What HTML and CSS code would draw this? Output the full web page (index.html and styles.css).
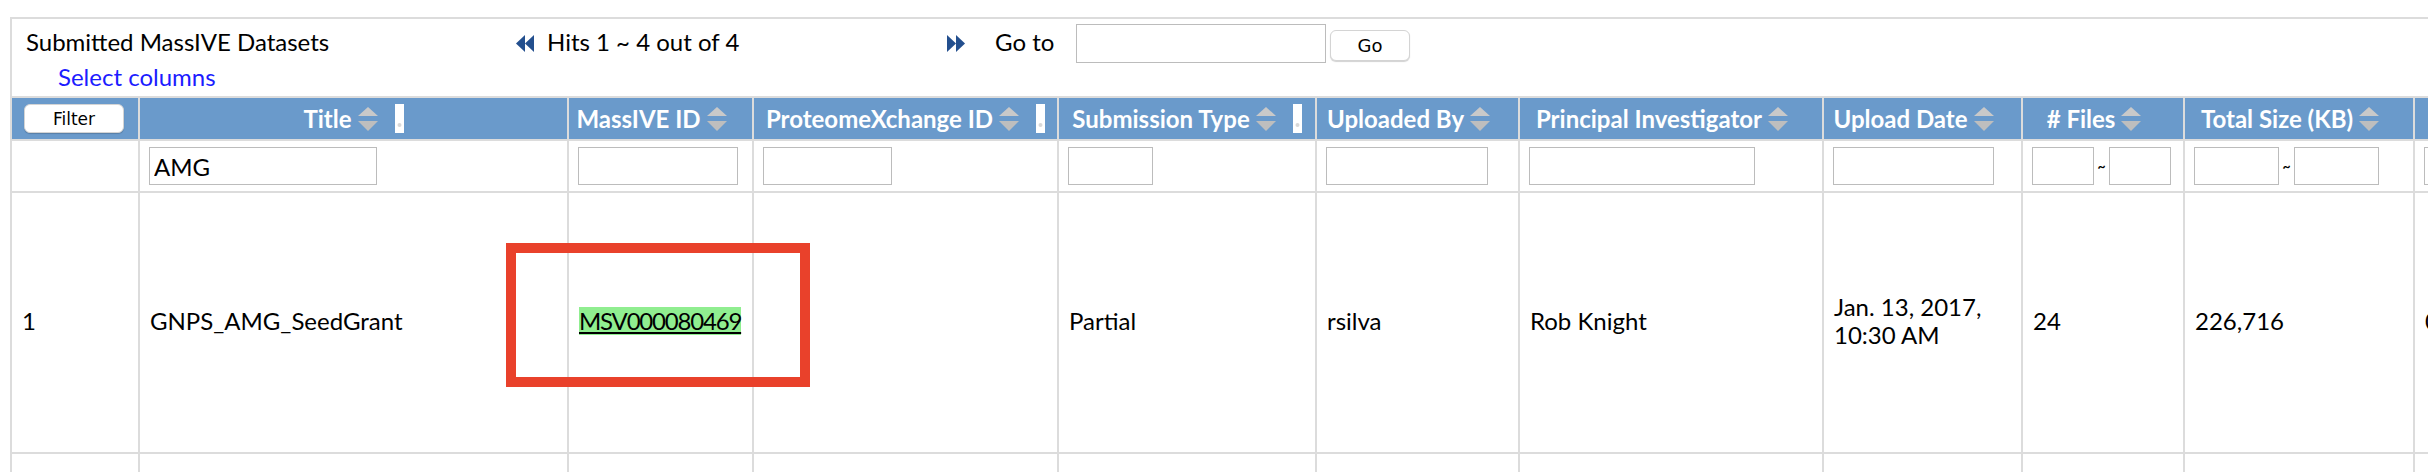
FILE: index.html
```html
<!DOCTYPE html>
<html lang="en">
<head>
<meta charset="utf-8">
<title>Submitted MassIVE Datasets</title>
<link rel="stylesheet" href="styles.css">
</head>
<body>
<div class="panel">
  <div class="toolbar">
    <div class="ds-title">Submitted MassIVE Datasets</div>
    <div class="pager">
      <svg class="nav-icon" viewBox="0 0 18 17" aria-hidden="true"><polygon points="9,0 0,8.5 9,17"/><polygon points="18,0 9,8.5 18,17"/></svg>
      <span class="hits">Hits 1 ~ 4 out of 4</span>
    </div>
    <div class="goto">
      <svg class="nav-icon" viewBox="0 0 18 17" aria-hidden="true"><polygon points="0,0 9,8.5 0,17"/><polygon points="9,0 18,8.5 9,17"/></svg>
      <span class="goto-label">Go to</span>
      <input class="goto-input" type="text">
      <button class="btn go-btn" type="button">Go</button>
    </div>
  </div>
  <a class="select-cols" href="#">Select columns</a>

  <div class="grid">
    <!-- header row -->
    <div class="cell head"><button class="btn filter-btn" type="button">Filter</button></div>
    <div class="cell head"><span>Title</span><svg class="sort" viewBox="0 0 20 24"><polygon class="up" points="10,0 20,9 0,9"/><polygon class="down" points="0,14 20,14 10,24"/></svg><svg class="grip" viewBox="0 0 9 29"><rect class="grip-bar" x="0" y="0" width="9" height="29"/><circle class="grip-dot" cx="4.5" cy="21" r="2"/></svg></div>
    <div class="cell head noresize"><span>MassIVE ID</span><svg class="sort" viewBox="0 0 20 24"><polygon class="up" points="10,0 20,9 0,9"/><polygon class="down" points="0,14 20,14 10,24"/></svg></div>
    <div class="cell head"><span>ProteomeXchange ID</span><svg class="sort" viewBox="0 0 20 24"><polygon class="up" points="10,0 20,9 0,9"/><polygon class="down" points="0,14 20,14 10,24"/></svg><svg class="grip" viewBox="0 0 9 29"><rect class="grip-bar" x="0" y="0" width="9" height="29"/><circle class="grip-dot" cx="4.5" cy="21" r="2"/></svg></div>
    <div class="cell head"><span>Submission Type</span><svg class="sort" viewBox="0 0 20 24"><polygon class="up" points="10,0 20,9 0,9"/><polygon class="down" points="0,14 20,14 10,24"/></svg><svg class="grip" viewBox="0 0 9 29"><rect class="grip-bar" x="0" y="0" width="9" height="29"/><circle class="grip-dot" cx="4.5" cy="21" r="2"/></svg></div>
    <div class="cell head noresize"><span>Uploaded By</span><svg class="sort" viewBox="0 0 20 24"><polygon class="up" points="10,0 20,9 0,9"/><polygon class="down" points="0,14 20,14 10,24"/></svg></div>
    <div class="cell head noresize"><span>Principal Investigator</span><svg class="sort" viewBox="0 0 20 24"><polygon class="up" points="10,0 20,9 0,9"/><polygon class="down" points="0,14 20,14 10,24"/></svg></div>
    <div class="cell head noresize"><span>Upload Date</span><svg class="sort" viewBox="0 0 20 24"><polygon class="up" points="10,0 20,9 0,9"/><polygon class="down" points="0,14 20,14 10,24"/></svg></div>
    <div class="cell head noresize"><span># Files</span><svg class="sort" viewBox="0 0 20 24"><polygon class="up" points="10,0 20,9 0,9"/><polygon class="down" points="0,14 20,14 10,24"/></svg></div>
    <div class="cell head noresize"><span>Total Size (KB)</span><svg class="sort" viewBox="0 0 20 24"><polygon class="up" points="10,0 20,9 0,9"/><polygon class="down" points="0,14 20,14 10,24"/></svg></div>
    <div class="cell head"></div>

    <!-- filter row -->
    <div class="cell filt"></div>
    <div class="cell filt"><input class="fin w-title" type="text" value="AMG"></div>
    <div class="cell filt"><input class="fin w-msv" type="text"></div>
    <div class="cell filt"><input class="fin w-px" type="text"></div>
    <div class="cell filt"><input class="fin w-type" type="text"></div>
    <div class="cell filt"><input class="fin w-user" type="text"></div>
    <div class="cell filt"><input class="fin w-pi" type="text"></div>
    <div class="cell filt"><input class="fin w-date" type="text"></div>
    <div class="cell filt"><input class="fin w-files" type="text"><span class="tilde">~</span><input class="fin w-files" type="text"></div>
    <div class="cell filt"><input class="fin w-size" type="text"><span class="tilde">~</span><input class="fin w-size" type="text"></div>
    <div class="cell filt"><input class="fin w-spec" type="text"></div>

    <!-- data row -->
    <div class="cell data">1</div>
    <div class="cell data">GNPS_AMG_SeedGrant</div>
    <div class="cell data"><a class="msv" href="#">MSV000080469</a></div>
    <div class="cell data"></div>
    <div class="cell data">Partial</div>
    <div class="cell data">rsilva</div>
    <div class="cell data">Rob Knight</div>
    <div class="cell data">Jan. 13, 2017, 10:30 AM</div>
    <div class="cell data">24</div>
    <div class="cell data">226,716</div>
    <div class="cell data">0</div>

    <!-- next row (cut off) -->
    <div class="cell next"></div>
    <div class="cell next"></div>
    <div class="cell next"></div>
    <div class="cell next"></div>
    <div class="cell next"></div>
    <div class="cell next"></div>
    <div class="cell next"></div>
    <div class="cell next"></div>
    <div class="cell next"></div>
    <div class="cell next"></div>
    <div class="cell next"></div>
  </div>
</div>
<div class="callout" aria-hidden="true"></div>
</body>
</html>
```

FILE: styles.css
```css
html, body {
  margin: 0;
  padding: 0;
  overflow: hidden;
  background: #ffffff;
}

body {
  position: relative;
  width: 2428px;
  height: 472px;
  font-family: Lato, "Open Sans", sans-serif;
  font-size: 24px;
  line-height: 28px;
  color: #000;
}

.panel {
  margin: 17px 0 0 10px;
  width: 2603px;
  border-top: 2px solid #dcdcdc;
  border-left: 2px solid #dcdcdc;
}

/* ---------- toolbar ---------- */
.toolbar {
  display: flex;
  align-items: flex-start;
  padding-top: 5px;
}

.ds-title {
  margin: 4px 0 0 14px;
  width: 490px;
  flex: none;
}

.pager {
  display: flex;
  align-items: flex-start;
  width: 431px;
  flex: none;
  margin-top: 4px;
}

.nav-icon {
  width: 18px;
  height: 17px;
  margin-top: 7px;
  fill: #234f8e;
  flex: none;
}

.hits {
  margin-left: 13px;
}

.goto {
  display: flex;
  align-items: flex-start;
}

.goto .nav-icon {
  margin-top: 11px;
}

.goto-label {
  margin: 4px 0 0 30px;
  width: 81px;
  flex: none;
}

.goto-input {
  width: 250px;
  height: 39px;
  box-sizing: border-box;
  border: 1px solid #bcbcbc;
  margin: 0;
  padding: 0 5px;
  font: inherit;
}

.btn {
  background: #ffffff;
  border: 1px solid #d4d4d4;
  border-radius: 6px;
  box-shadow: 0 1px 1px rgba(0, 0, 0, 0.18);
  font-family: "DejaVu Sans", Verdana, sans-serif;
  color: #000;
  padding: 0;
  margin: 0;
}

.go-btn {
  width: 80px;
  height: 31px;
  margin: 6px 0 0 4px;
  font-size: 18px;
}

.select-cols {
  display: block;
  margin-left: 46px;
  width: max-content;
  color: #1c1cff;
  text-decoration: none;
}

/* ---------- grid ---------- */
.grid {
  margin-top: 5px;
  border-top: 2px solid #dcdcdc;
  display: grid;
  grid-template-columns: 126px 429px 185px 305px 258px 203px 304px 199px 162px 230px 300px;
}

.cell {
  box-sizing: border-box;
  border-left: 2px solid #dcdcdc;
  border-bottom: 2px solid #dcdcdc;
  min-width: 0;
}

.grid > .cell:nth-child(11n + 1) {
  border-left: 0;
}

.head {
  height: 43px;
  background: #6a9acb;
  color: #ffffff;
  font-weight: 700;
  display: flex;
  align-items: center;
  justify-content: center;
  white-space: nowrap;
  overflow: hidden;
}

.head.noresize {
  padding-right: 18px;
}

.filter-btn {
  width: 100px;
  height: 29px;
  font-size: 17px;
  margin-left: -2px;
}

.sort {
  display: block;
  width: 20px;
  height: 24px;
  margin-left: 6px;
  flex: none;
}

.sort .up {
  fill: #c9c9c9;
}

.sort .down {
  fill: #bebebe;
}

.grip {
  display: block;
  width: 9px;
  height: 29px;
  margin-left: 17px;
  flex: none;
}

.grip-bar {
  fill: #ffffff;
}

.grip-dot {
  fill: #d8d8d8;
}

.filt {
  height: 52px;
  display: flex;
  align-items: center;
  padding-left: 9px;
  overflow: hidden;
}

.fin {
  height: 38px;
  box-sizing: border-box;
  border: 1px solid #bcbcbc;
  margin: 0;
  padding: 0 4px;
  font: inherit;
  color: #000;
  flex: none;
}

.w-title { width: 228px; }
.w-msv { width: 160px; }
.w-px { width: 129px; }
.w-type { width: 85px; }
.w-user { width: 162px; }
.w-pi { width: 226px; }
.w-date { width: 161px; }
.w-files { width: 62px; }
.w-size { width: 85px; }
.w-spec { width: 160px; }

.tilde {
  width: 15px;
  text-align: center;
  font-size: 14px;
  font-weight: 700;
  flex: none;
}

.data {
  height: 261px;
  display: flex;
  align-items: center;
  padding: 0 8px 3px 10px;
}

.msv {
  color: #000;
  background: #90ee90;
  letter-spacing: -1.2px;
  text-decoration: underline;
  text-decoration-thickness: 2px;
  text-underline-offset: 2px;
  white-space: nowrap;
}

.next {
  height: 40px;
}

/* annotation box drawn over the page */
.callout {
  position: absolute;
  left: 506px;
  top: 243px;
  width: 304px;
  height: 144px;
  box-sizing: border-box;
  border: 10px solid #e9412b;
}
```
